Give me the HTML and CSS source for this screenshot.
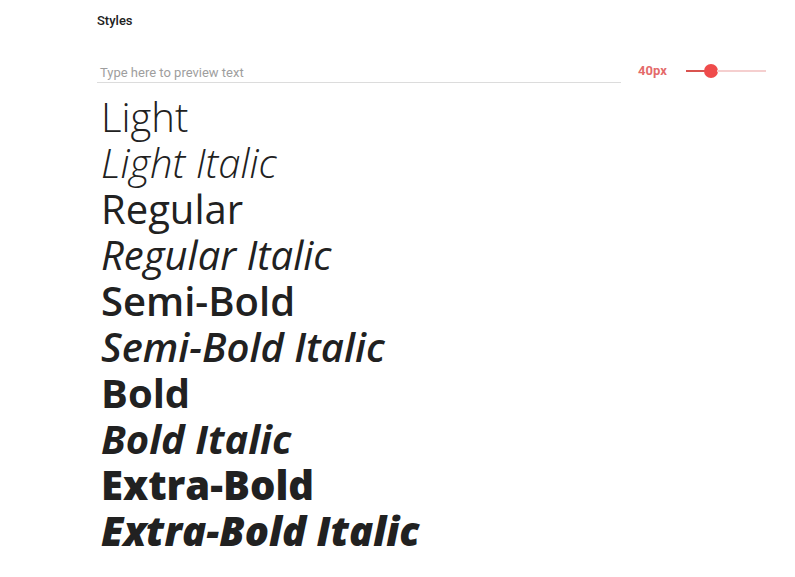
FILE: index.html
```html
<!DOCTYPE html>
<html>
<head>
<meta charset="utf-8">
<link rel="stylesheet" href="styles.css">
</head>
<body>
<div class="page">
  <h2 class="title">Styles</h2>
  <div class="controls">
    <div class="preview-input">Type here to preview text</div>
    <div class="size">
      <span class="size-label">40px</span>
      <div class="slider">
        <div class="track-active"></div>
        <div class="thumb"></div>
        <div class="track-rest"></div>
      </div>
    </div>
  </div>
  <div class="styles">
    <div class="s w300">Light</div>
    <div class="s w300 it">Light Italic</div>
    <div class="s w400">Regular</div>
    <div class="s w400 it">Regular Italic</div>
    <div class="s w600">Semi-Bold</div>
    <div class="s w600 it">Semi-Bold Italic</div>
    <div class="s w700">Bold</div>
    <div class="s w700 it">Bold Italic</div>
    <div class="s w800">Extra-Bold</div>
    <div class="s w800 it">Extra-Bold Italic</div>
  </div>
</div>
</body>
</html>
```
FILE: styles.css
```css
html, body { margin: 0; padding: 0; background: #fff; }
.page { padding: 12px 0 0 97px; width: 670px; }
.title {
  margin: 0;
  font: 500 13px/18px Roboto, sans-serif;
  color: #212121;
}
.controls {
  display: flex;
  align-items: center;
  margin-top: 29px;
}
.preview-input {
  width: 524px;
  box-sizing: border-box;
  padding: 0 0 1px 3px;
  border-bottom: 1px solid #dcdcdc;
  font: 400 13px/16px Roboto, sans-serif;
  color: #9e9e9e;
  margin-top: 6px;
}
.size {
  display: flex;
  align-items: center;
  margin-left: 17px;
}
.size-label {
  font: 700 13px/16px Roboto, sans-serif;
  color: #e46a6a;
  width: 48px;
}
.slider {
  display: flex;
  align-items: center;
  width: 80px;
}
.track-active { width: 19px; height: 2px; background: #d9534f; }
.thumb { width: 14px; height: 14px; border-radius: 50%; background: #ef4b4b; margin: 0 -1px; }
.track-rest { flex: 1; height: 2px; background: #f5cfcf; }
.styles { margin-top: 11px; padding-left: 4px; }
.s {
  font-family: "Open Sans", sans-serif;
  font-size: 40px;
  line-height: 46px;
  color: #212121;
  white-space: nowrap;
}
.w300 { font-weight: 300; }
.w400 { font-weight: 400; }
.w600 { font-weight: 600; }
.w700 { font-weight: 700; }
.w800 { font-weight: 800; }
.it { font-style: italic; }
```
